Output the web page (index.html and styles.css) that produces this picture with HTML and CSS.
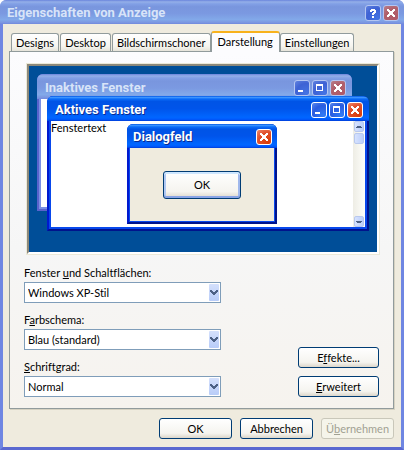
FILE: index.html
```html
<!DOCTYPE html>
<html lang="de">
<head>
  <meta charset="UTF-8">
  <meta name="viewport" content="width=device-width, initial-scale=1.0">
  <title>Eigenschaften von Anzeige</title>
  <link rel="stylesheet" href="styles.css">
</head>
<body>

<!-- window button glyphs -->
<svg class="defs" aria-hidden="true">
  <symbol id="i-min" viewBox="0 0 14 14"><path d="M3 9h5v2H3z" fill="#fff"/></symbol>
  <symbol id="i-max" viewBox="0 0 14 14"><path d="M3 3h7v7H3zM4 5v4h5V5z" fill="#fff" fill-rule="evenodd"/></symbol>
  <symbol id="i-close" viewBox="0 0 14 14"><path d="M3 3h2v1h1v1h2V4h1V3h2v2h-1v1H9v2h1v1h1v2H9v-1H8V9H6v1H5v1H3V9h1V8h1V6H4V5H3z" fill="#fff"/></symbol>
  <symbol id="i-help" viewBox="0 0 14 14"><path d="M5 3h4v1h1v3H9v1H8v1H6V7h1V6h1V5H6v1H4V4h1zM6 10h2v2H6z" fill="#fff"/></symbol>
  <symbol id="i-drop" viewBox="0 0 10 17"><path d="M1 6h2v1h1v1h2V7h1V6h2v2H8v1H7v1H6v1H4v-1H3V9H2V8H1z" fill="#4d6185"/></symbol>
</svg>

<div class="window inactive">
  <header class="titlebar">
    <h1>Eigenschaften von Anzeige</h1>
    <button class="ctl help" aria-label="Hilfe"><svg><use href="#i-help"/></svg></button>
    <button class="ctl close" aria-label="Schließen"><svg><use href="#i-close"/></svg></button>
  </header>

  <main class="content">
    <div class="tabs" role="tablist">
      <button class="tab" role="tab">Designs</button>
      <button class="tab" role="tab">Desktop</button>
      <button class="tab" role="tab">Bildschirmschoner</button>
      <button class="tab active" role="tab" aria-selected="true">Darstellung</button>
      <button class="tab" role="tab">Einstellungen</button>
    </div>

    <section class="panel" role="tabpanel">
      <div class="preview">
        <div class="mini mini-back inactive">
          <div class="titlebar">
            <h2>Inaktives Fenster</h2>
            <button class="ctl" aria-label="Minimieren"><svg><use href="#i-min"/></svg></button>
            <button class="ctl" aria-label="Maximieren"><svg><use href="#i-max"/></svg></button>
            <button class="ctl close" aria-label="Schließen"><svg><use href="#i-close"/></svg></button>
          </div>
          <div class="mini-body"></div>
        </div>

        <div class="mini mini-front">
          <div class="titlebar">
            <h2>Aktives Fenster</h2>
            <button class="ctl" aria-label="Minimieren"><svg><use href="#i-min"/></svg></button>
            <button class="ctl" aria-label="Maximieren"><svg><use href="#i-max"/></svg></button>
            <button class="ctl close" aria-label="Schließen"><svg><use href="#i-close"/></svg></button>
          </div>
          <div class="mini-body">
            <span>Fenstertext</span>
            <div class="scrollbar">
              <svg class="scroll-btn" viewBox="0 0 8 9"><path d="M1 5h1V4h4v1h1v1H1z" fill="#4d6185"/></svg>
              <div class="scroll-btn"></div>
              <svg class="scroll-btn last" viewBox="0 0 8 9"><path d="M1 4h6v1H6v1H2V5H1z" fill="#4d6185"/></svg>
            </div>
          </div>
        </div>

        <div class="mini mini-dialog">
          <div class="titlebar">
            <h2>Dialogfeld</h2>
            <button class="ctl close" aria-label="Schließen"><svg><use href="#i-close"/></svg></button>
          </div>
          <div class="mini-body">
            <button class="btn default">OK</button>
          </div>
        </div>
      </div>

      <div class="settings">
        <div class="fields">
          <div class="field">
            <label for="stil">Fenster <u>u</u>nd Schaltflächen:</label>
            <div class="select">
              <select id="stil"><option>Windows XP-Stil</option></select>
              <svg><use href="#i-drop"/></svg>
            </div>
          </div>
          <div class="field">
            <label for="farbe">F<u>a</u>rbschema:</label>
            <div class="select">
              <select id="farbe"><option>Blau (standard)</option></select>
              <svg><use href="#i-drop"/></svg>
            </div>
          </div>
          <div class="field">
            <label for="schrift"><u>S</u>chriftgrad:</label>
            <div class="select">
              <select id="schrift"><option>Normal</option></select>
              <svg><use href="#i-drop"/></svg>
            </div>
          </div>
        </div>
        <div class="side">
          <button class="btn">E<u>f</u>fekte...</button>
          <button class="btn"><u>E</u>rweitert</button>
        </div>
      </div>
    </section>

    <footer class="actions">
      <button class="btn">OK</button>
      <button class="btn">Abbrechen</button>
      <button class="btn" disabled>Ü<u>b</u>ernehmen</button>
    </footer>
  </main>
</div>

</body>
</html>
```
FILE: styles.css
```css
:root {
  --face: #efebde;
  --navy: #003c74;
  --title: linear-gradient(#0058e6 0%, #3a93ff 6%, #0a6cf8 12%, #0054e6 22%, #0054ea 50%, #0066ff 85%, #005bff 93%, #003dd7 100%);
  --title-off: linear-gradient(#6a84dc 0%, #94afe8 8%, #82a0e6 16%, #7996de 28%, #7b99e1 56%, #82a9e9 82%, #7b96e1 94%, #7088dc 100%);
}

* {
  box-sizing: border-box;
}

body {
  margin: 0;
  background: #fff;
  color: #000;
  font: 11px/14px Lato, "Liberation Sans", sans-serif;
  font-variant-ligatures: none;
}

button,
select {
  font: inherit;
  font-variant-ligatures: none;
  color: inherit;
  margin: 0;
}

h1,
h2 {
  flex: 1;
  margin: 0;
  color: #fff;
  font: bold 13px/16px Roboto, "Liberation Sans", sans-serif;
  white-space: nowrap;
}

.defs {
  display: none;
}

/* windows */
.window {
  display: flex;
  flex-direction: column;
  border: solid #6f86e2;
  border-width: 0 3px 3px;
  border-bottom-color: #5a68d0;
  border-radius: 7px 7px 0 0;
  background: var(--face);
}

.titlebar {
  display: flex;
  align-items: center;
  gap: 2px;
  height: 25px;
  border-radius: 6px 6px 0 0;
  background: var(--title);
}

.window > .titlebar {
  height: 24px;
  margin: 0 -3px;
  padding: 2px 5px 0 7px;
}

.titlebar h2 {
  text-shadow: 1px 1px #0a2a90;
}

.inactive > .titlebar h1,
.inactive > .titlebar h2 {
  color: #d8e4f8;
  text-shadow: none;
}

.inactive > .titlebar {
  background: var(--title-off);
}

.ctl {
  display: flex;
  width: 16px;
  height: 16px;
  padding: 0;
  border: 1px solid #fff;
  border-radius: 3px;
  background: radial-gradient(circle at 80% 90%, #2f7cf6, #2a5ce0 60%, #5b8af0);
}

.ctl.close {
  background: radial-gradient(circle at 80% 90%, #d93c08, #e0502c 60%, #ee8c70);
}

.inactive > .titlebar .ctl {
  border-color: #b4c6f2;
  background: radial-gradient(circle at 80% 90%, #4474e4, #3e62d4 60%, #6284e0);
}

.inactive > .titlebar .ctl.close {
  background: radial-gradient(circle at 80% 90%, #b05a68, #b0606c 60%, #b8808c);
}

.ctl svg {
  width: 14px;
  height: 14px;
}

/* tabs */
.content {
  padding: 7px 7px 8px 6px;
}

.tabs {
  display: flex;
  align-items: flex-end;
  gap: 1px;
  padding-left: 2px;
}

.tab {
  height: 18px;
  padding: 0 4px;
  border: 1px solid #919b9c;
  border-bottom: 0;
  border-radius: 3px 3px 0 0;
  background: linear-gradient(#fff, #f6f5f0 70%, #e6e4da);
  white-space: nowrap;
}

.tab.active {
  position: relative;
  height: 21px;
  margin: 0 -1px -1px;
  padding: 0 6px 2px;
  border-top: 2px solid #f8b21c;
  background: #fcfcfe;
}

.panel {
  padding: 12px 14px 11px;
  border: 1px solid #919b9c;
  box-shadow: 1px 1px #d6d2c2;
  background: linear-gradient(#fcfcfe, #f6f6f6 55%, #f6f3ee);
}

/* preview desktop */
.preview {
  position: relative;
  height: 190px;
  margin-left: 3px;
  border: 2px solid;
  border-color: #8c887a #fff #fff #8c887a;
  box-shadow: 0 0 0 1px #ece9d8;
  background: #004e98;
}

.mini {
  position: absolute;
  display: flex;
  flex-direction: column;
  padding: 0 2px 2px;
  border: solid;
  border-width: 0 2px 2px;
  border-color: #0019cf #00138c #00138c #0019cf;
  border-radius: 6px 6px 0 0;
  background: #0848ec;
}

.mini .titlebar {
  margin: 0 -4px;
  padding: 3px 6px 0 8px;
}

.mini-body {
  display: flex;
  flex: 1;
  background: #fff;
}

.mini-back {
  left: 8px;
  right: 25px;
  top: 8px;
  height: 137px;
  border-color: #5a63cc;
  background: #7b90e4;
}

.mini-front {
  left: 18px;
  right: 8px;
  top: 30px;
  height: 135px;
}

.mini-front .mini-body {
  justify-content: space-between;
}

.mini-dialog {
  left: 98px;
  top: 58px;
  width: 150px;
  height: 100px;
  padding: 0 1px 1px;
}

.mini-dialog .titlebar {
  height: 24px;
  margin: 0 -3px;
  padding: 2px 5px 0 6px;
}

.mini-dialog .mini-body {
  align-items: center;
  justify-content: center;
  background: var(--face);
}

.scrollbar {
  display: flex;
  flex-direction: column;
  gap: 1px;
  width: 12px;
  padding: 0 1px;
  background: linear-gradient(90deg, #eeede5, #fefefb);
}

.scroll-btn {
  width: 10px;
  height: 11px;
  border: 1px solid #b8c8ee;
  border-radius: 2px;
  background: linear-gradient(90deg, #d6e2fe, #bccefa);
}

.scroll-btn.last {
  margin-top: auto;
}

/* form */
.settings {
  display: flex;
  justify-content: space-between;
  align-items: flex-end;
  margin-top: 12px;
}

.fields {
  display: flex;
  flex-direction: column;
  gap: 10px;
  flex: 0 1 197px;
}

.field {
  display: flex;
  flex-direction: column;
  gap: 2px;
}

.select {
  position: relative;
  height: 21px;
}

.select select {
  width: 100%;
  height: 21px;
  padding: 0 16px 0 3px;
  border: 1px solid #7f9db9;
  border-radius: 0;
  background: #fff;
  appearance: none;
}

.select svg {
  position: absolute;
  top: 2px;
  right: 2px;
  width: 10px;
  height: 17px;
  border-radius: 1px;
  background: linear-gradient(#d4e0fc, #b8ccf8);
  pointer-events: none;
}

.side {
  display: flex;
  flex-direction: column;
  gap: 8px;
  flex: 0 0 81px;
}

.btn {
  height: 21px;
  padding: 0;
  border: 1px solid var(--navy);
  border-radius: 3px;
  background: linear-gradient(#fff, #f5f4ef 75%, #dcd6ca);
}

.btn.default {
  width: 78px;
  height: 28px;
  box-shadow: inset 0 2px #cee7ff, inset 0 -2px #89a4e6, inset 2px 0 #b0c8f2, inset -2px 0 #a0b8ec;
}

.btn:disabled {
  border-color: #c9c7ba;
  background: #f5f4ea;
  color: #a1a192;
}

.actions {
  display: flex;
  justify-content: flex-end;
  gap: 8px;
  margin-top: 9px;
}

.actions .btn {
  width: 73px;
}
```
